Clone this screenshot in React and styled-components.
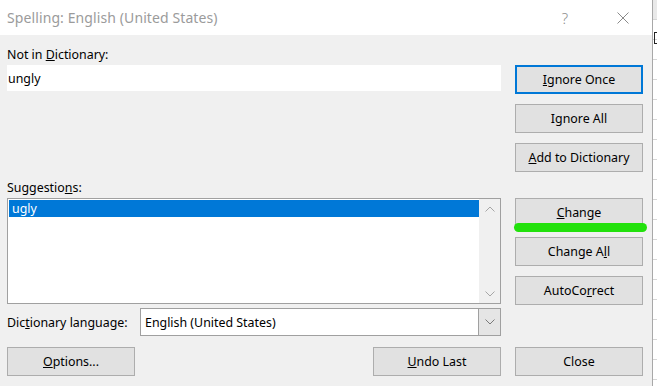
import React from 'react';
import styled, { createGlobalStyle } from 'styled-components';

const GlobalStyle = createGlobalStyle`
  html, body {
    margin: 0;
    padding: 0;
    background: #fff;
  }
  body {
    font-family: "Noto Sans", "Open Sans", sans-serif;
    font-size: 12.4px;
    color: #000;
  }
`;

const Page = styled.div`
  display: flex;
  width: 657px;
  height: 386px;
  overflow: hidden;
`;

const Dialog = styled.div`
  width: 652px;
  flex-shrink: 0;
  display: flex;
  flex-direction: column;
  border-right: 1px solid #a8a8a8;
`;

const TitleBar = styled.div`
  height: 35px;
  flex-shrink: 0;
  display: flex;
  align-items: center;
  padding-left: 7px;
  background: #fff;
`;

const Title = styled.div`
  flex: 1;
  font-size: 14px;
  color: #9b9b9b;
  letter-spacing: 0.1px;
`;

const TitleControl = styled.div`
  width: 58px;
  height: 35px;
  display: flex;
  align-items: center;
  justify-content: center;
  color: #8e8e8e;
  font-size: 15px;
  font-weight: 300;
`;

const Body = styled.div`
  flex: 1;
  background: #f0f0f0;
  display: flex;
  gap: 14px;
  padding: 0 9px 0 7px;
`;

const LeftColumn = styled.div`
  width: 494px;
  display: flex;
  flex-direction: column;
  padding-top: 10px;
`;

const RightColumn = styled.div`
  flex: 1;
  display: flex;
  flex-direction: column;
  padding-top: 30px;
  position: relative;
`;

const Label = styled.div`
  height: 20px;
  line-height: 20px;
  margin-top: ${p => p.$top || 0}px;
  white-space: nowrap;
`;

const TextBox = styled.div`
  height: 26px;
  background: #fff;
  display: flex;
  align-items: center;
  padding-left: 1px;
`;

const ListBox = styled.div`
  height: 106px;
  background: #fff;
  border: 1px solid #a0a0a0;
  box-sizing: border-box;
  display: flex;
  padding: 1px 0 0 1px;
`;

const ListItems = styled.div`
  flex: 1;
`;

const ListItem = styled.div`
  height: 17px;
  line-height: 17px;
  padding-left: 3px;
  background: ${p => (p.$selected ? '#0078d7' : 'transparent')};
  color: ${p => (p.$selected ? '#fff' : '#000')};
`;

const ScrollBar = styled.div`
  width: 21px;
  background: #f0f0f0;
  margin-top: -1px;
  display: flex;
  flex-direction: column;
  justify-content: space-between;
  align-items: center;
  padding: 7px 0 6px;
`;

const LanguageRow = styled.div`
  display: flex;
  align-items: center;
  margin-top: 4px;
  height: 28px;
`;

const LanguageLabel = styled.div`
  width: 133px;
`;

const Select = styled.div`
  flex: 1;
  height: 28px;
  box-sizing: border-box;
  background: #fff;
  border: 1px solid #a0a0a0;
  display: flex;
  align-items: stretch;
`;

const SelectValue = styled.div`
  flex: 1;
  display: flex;
  align-items: center;
  padding-left: 4px;
`;

const SelectButton = styled.div`
  width: 21px;
  background: #e5e5e5;
  border-left: 1px solid #a0a0a0;
  display: flex;
  align-items: center;
  justify-content: center;
`;

const BottomRow = styled.div`
  display: flex;
  justify-content: space-between;
  margin-top: 11px;
`;

const Button = styled.div`
  width: 128px;
  height: 29px;
  box-sizing: border-box;
  margin-top: ${p => p.$top || 0}px;
  background: #e1e1e1;
  border: ${p => (p.$primary ? '2px solid #0078d7' : '1px solid #adadad')};
  display: flex;
  align-items: center;
  justify-content: center;
  white-space: nowrap;
`;

const Highlight = styled.div`
  position: absolute;
  left: -1px;
  top: 188px;
  width: 133px;
  height: 9px;
  border-radius: 5px;
  background: #22e10c;
`;

const SheetStrip = styled.div`
  flex: 1;
  position: relative;
  background:
    linear-gradient(#e9e9e9, #e9e9e9) top / 100% 19px no-repeat,
    repeating-linear-gradient(to bottom, #fff 0 19px, #d6d6d6 19px 20px);
`;

const CellMarker = styled.div`
  position: absolute;
  left: 1px;
  top: 32px;
  width: 10px;
  height: 10px;
  border: 1px solid #222;
`;

const Chevron = ({ up, color = '#a6a6a6' }) => (
  <svg width="10" height="6" viewBox="0 0 10 6">
    <path
      d={up ? 'M0.5 5.5 L5 1 L9.5 5.5' : 'M0.5 0.5 L5 5 L9.5 0.5'}
      fill="none"
      stroke={color}
      strokeWidth="1"
    />
  </svg>
);

const CloseIcon = () => (
  <svg width="12" height="12" viewBox="0 0 12 12">
    <path d="M0.5 0.5 L11.5 11.5 M11.5 0.5 L0.5 11.5" stroke="#8a8a8a" strokeWidth="1" />
  </svg>
);

export default function App() {
  return (
    <Page>
      <GlobalStyle />
      <Dialog>
        <TitleBar>
          <Title>Spelling: English (United States)</Title>
          <TitleControl>?</TitleControl>
          <TitleControl>
            <CloseIcon />
          </TitleControl>
        </TitleBar>
        <Body>
          <LeftColumn>
            <Label>
              Not in <u>D</u>ictionary:
            </Label>
            <TextBox>ungly</TextBox>
            <Label $top={87}>
              Suggestio<u>n</u>s:
            </Label>
            <ListBox>
              <ListItems>
                <ListItem $selected>ugly</ListItem>
              </ListItems>
              <ScrollBar>
                <Chevron up />
                <Chevron />
              </ScrollBar>
            </ListBox>
            <LanguageRow>
              <LanguageLabel>
                Dic<u>t</u>ionary language:
              </LanguageLabel>
              <Select>
                <SelectValue>English (United States)</SelectValue>
                <SelectButton>
                  <Chevron color="#7a7a7a" />
                </SelectButton>
              </Select>
            </LanguageRow>
            <BottomRow>
              <Button>
                <u>O</u>ptions...
              </Button>
              <Button>
                <u>U</u>ndo Last
              </Button>
            </BottomRow>
          </LeftColumn>
          <RightColumn>
            <Button $primary>
              <u>I</u>gnore Once
            </Button>
            <Button $top={10}>
              I<u>g</u>nore All
            </Button>
            <Button $top={10}>
              <u>A</u>dd to Dictionary
            </Button>
            <Button $top={26}>
              <u>C</u>hange
            </Button>
            <Button $top={10}>
              Change A<u>l</u>l
            </Button>
            <Button $top={10}>
              AutoCo<u>r</u>rect
            </Button>
            <Button $top={42}>Close</Button>
            <Highlight />
          </RightColumn>
        </Body>
      </Dialog>
      <SheetStrip>
        <CellMarker />
      </SheetStrip>
    </Page>
  );
}
